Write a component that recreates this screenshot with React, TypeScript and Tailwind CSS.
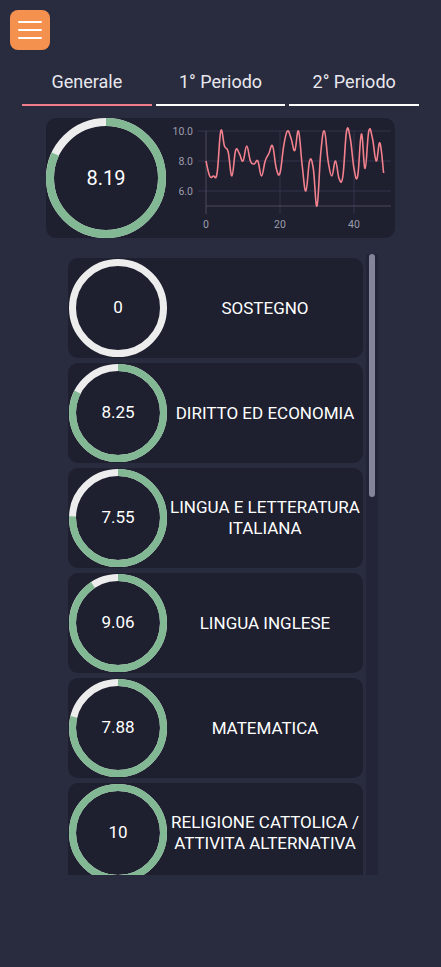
import React from "react";

const FONT = { fontFamily: "Roboto, 'Noto Sans', sans-serif" };

const SERIES = [
  8.0, 7.0, 7.0, 7.2, 10.0, 9.0, 8.6, 7.0, 8.7, 8.5, 8.0, 9.0, 8.0, 7.8, 8.0,
  7.0, 8.0, 8.5, 9.0, 7.5, 7.2, 9.0, 10.0, 9.5, 8.7, 10.0, 7.7, 6.0, 8.0, 7.5,
  5.0, 8.5, 10.0, 8.0, 7.0, 8.0, 6.8, 7.0, 10.0, 9.5, 7.5, 7.0, 9.8, 7.5, 10.0,
  9.5, 8.0, 9.2, 7.2,
];

const SUBJECTS = [
  { name: "SOSTEGNO", avg: 0 },
  { name: "DIRITTO ED ECONOMIA", avg: 8.25 },
  { name: "LINGUA E LETTERATURA ITALIANA", avg: 7.55 },
  { name: "LINGUA INGLESE", avg: 9.06 },
  { name: "MATEMATICA", avg: 7.88 },
  { name: "RELIGIONE CATTOLICA / ATTIVITA ALTERNATIVA", avg: 10 },
];

function Ring({
  size,
  stroke,
  value,
  label,
  textClass,
}: {
  size: number;
  stroke: number;
  value: number;
  label: string;
  textClass: string;
}) {
  const r = (size - stroke) / 2;
  const c = 2 * Math.PI * r;
  const frac = Math.max(0, Math.min(1, value / 10));
  return (
    <div className="relative shrink-0" style={{ width: size, height: size }}>
      <svg width={size} height={size} className="-rotate-90">
        <circle
          cx={size / 2}
          cy={size / 2}
          r={r}
          fill="none"
          stroke="#ededed"
          strokeWidth={stroke}
        />
        {frac > 0 && (
          <circle
            cx={size / 2}
            cy={size / 2}
            r={r}
            fill="none"
            stroke="#82b893"
            strokeWidth={stroke}
            strokeDasharray={`${c * frac} ${c}`}
          />
        )}
      </svg>
      <div
        className={`absolute inset-0 flex items-center justify-center text-white ${textClass}`}
      >
        {label}
      </div>
    </div>
  );
}

function smoothPath(pts: [number, number][]) {
  let d = `M${pts[0][0]},${pts[0][1]}`;
  for (let i = 0; i < pts.length - 1; i++) {
    const p0 = pts[i - 1] || pts[i];
    const p1 = pts[i];
    const p2 = pts[i + 1];
    const p3 = pts[i + 2] || p2;
    const t = 0.2;
    const c1x = p1[0] + (p2[0] - p0[0]) * t;
    const c1y = p1[1] + (p2[1] - p0[1]) * t;
    const c2x = p2[0] - (p3[0] - p1[0]) * t;
    const c2y = p2[1] - (p3[1] - p1[1]) * t;
    d += ` C${c1x},${c1y} ${c2x},${c2y} ${p2[0]},${p2[1]}`;
  }
  return d;
}

function Chart() {
  const x = (i: number) => 40 + i * 3.7;
  const y = (v: number) => 13 + (10 - v) * 15;
  const pts = SERIES.map((v, i) => [x(i), y(v)] as [number, number]);
  return (
    <svg width={230} height={120} className="shrink-0">
      {[10, 8, 6].map((v) => (
        <g key={v}>
          <line x1={32} x2={225} y1={y(v)} y2={y(v)} stroke="#33344a" strokeWidth={1} />
          <text
            x={27}
            y={y(v) + 3.5}
            textAnchor="end"
            fontSize={10.5}
            fill="#9c9dac"
            style={FONT}
          >
            {v.toFixed(1)}
          </text>
        </g>
      ))}
      {[20, 40].map((i) => (
        <line key={i} x1={x(i)} x2={x(i)} y1={13} y2={96} stroke="#33344a" strokeWidth={1} />
      ))}
      <line x1={x(0)} x2={x(0)} y1={13} y2={96} stroke="#4a4b5e" strokeWidth={1} />
      <line x1={x(0)} x2={225} y1={y(5)} y2={y(5)} stroke="#4a4b5e" strokeWidth={1} />
      {[0, 20, 40].map((i) => (
        <text
          key={i}
          x={x(i)}
          y={110}
          textAnchor="middle"
          fontSize={10.5}
          fill="#9c9dac"
          style={FONT}
        >
          {i}
        </text>
      ))}
      <path d={smoothPath(pts)} fill="none" stroke="#f3818d" strokeWidth={1.6} />
    </svg>
  );
}

export default function App() {
  const tabs = ["Generale", "1° Periodo", "2° Periodo"];
  return (
    <div className="min-h-[967px] w-full bg-[#292b3f] pt-[10px]" style={FONT}>
      <div className="pl-[10px]">
        <button className="flex h-10 w-10 flex-col items-center justify-center gap-[6px] rounded-[8px] bg-[#f4914f]">
          <span className="block h-[2px] w-6 rounded-full bg-white" />
          <span className="block h-[2px] w-6 rounded-full bg-white" />
          <span className="block h-[2px] w-6 rounded-full bg-white" />
        </button>
      </div>

      <div className="mt-5 flex gap-1 px-[22px]">
        {tabs.map((t, i) => (
          <div
            key={t}
            className={`flex-1 border-b-2 pb-[10px] text-center text-[18px] leading-6 text-[#e8e8ee] ${
              i === 0 ? "border-[#f07c8a]" : "border-white"
            }`}
          >
            {t}
          </div>
        ))}
      </div>

      <div className="mx-[46px] mt-3 flex h-[120px] items-center overflow-hidden rounded-[10px] bg-[#1e1f2f]">
        <Ring size={120} stroke={8} value={8.19} label="8.19" textClass="text-[20px]" />
        <Chart />
      </div>

      <div className="ml-[68px] mt-4 flex h-[621px] w-[310px] gap-[3px]">
        <div className="w-[295px] overflow-hidden">
          <div className="flex flex-col gap-[5px] pt-[4px]">
            {SUBJECTS.map((s) => (
              <div
                key={s.name}
                className="flex h-[100px] shrink-0 items-center rounded-[10px] bg-[#1e1f2f] pl-[1px]"
              >
                <Ring
                  size={98}
                  stroke={7}
                  value={s.avg}
                  label={String(s.avg)}
                  textClass="text-[17px]"
                />
                <div className="flex-1 text-center text-[17px] leading-[21px] text-white">
                  {s.name}
                </div>
              </div>
            ))}
          </div>
        </div>
        <div className="flex w-[12px] justify-center bg-[#232437]">
          <div className="h-[243px] w-[6px] rounded-full bg-[#84849a]" />
        </div>
      </div>
    </div>
  );
}
